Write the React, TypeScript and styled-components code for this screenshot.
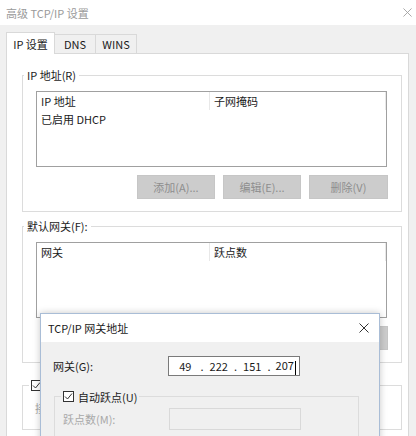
import React from "react";
import styled, { createGlobalStyle } from "styled-components";

const GlobalStyle = createGlobalStyle`
  html, body {
    margin: 0;
    padding: 0;
    background: #f0f0f0;
  }
  body {
    font-family: "Noto Sans CJK SC", "Microsoft YaHei", sans-serif;
    font-size: 11px;
    color: #1a1a1a;
  }
  * {
    box-sizing: border-box;
  }
`;

const CloseIcon = ({ size, color }: { size: number; color: string }) => (
  <svg width={size} height={size} viewBox="0 0 10 10">
    <path d="M0.5 0.5 L9.5 9.5 M9.5 0.5 L0.5 9.5" stroke={color} strokeWidth="1" fill="none" />
  </svg>
);

const CheckBox = () => (
  <CheckBoxStyle>
    <svg width="9" height="9" viewBox="0 0 9 9">
      <path d="M1 4.5 L3.5 7 L8 1.5" stroke="#333" strokeWidth="1" fill="none" />
    </svg>
  </CheckBoxStyle>
);

interface ListProps {
  columns: string[];
  rows: string[];
}

const ListView = ({ columns, rows }: ListProps) => {
  return (
    <ListBox>
      <HeaderRow>
        {columns.map((c) => (
          <HeaderCell key={c}>{c}</HeaderCell>
        ))}
      </HeaderRow>
      {rows.map((r) => (
        <ListRow key={r}>{r}</ListRow>
      ))}
    </ListBox>
  );
};

const ListButtons = () => (
  <ButtonRow>
    <Button disabled>添加(A)...</Button>
    <Button disabled>编辑(E)...</Button>
    <Button disabled $width={79}>删除(V)</Button>
  </ButtonRow>
);

const IpField = ({ parts }: { parts: string[] }) => (
  <IpBox>
    {parts.map((p, i) => (
      <React.Fragment key={i}>
        {i > 0 && <IpDot>.</IpDot>}
        <IpSegment>
          {p}
          {i === parts.length - 1 && <Caret />}
        </IpSegment>
      </React.Fragment>
    ))}
  </IpBox>
);

export default function App() {
  return (
    <>
      <GlobalStyle />
      <Window>
        <TitleBar>
          <span>高级 TCP/IP 设置</span>
          <CloseIcon size={9} color="#a0a0a0" />
        </TitleBar>
        <TabStrip>
          <Tab $active $width={49}>IP 设置</Tab>
          <Tab $width={42}>DNS</Tab>
          <Tab $width={42}>WINS</Tab>
        </TabStrip>
        <Panel>
          <Group>
            <Legend>IP 地址(R)</Legend>
            <GroupBody>
              <ListView columns={["IP 地址", "子网掩码"]} rows={["已启用 DHCP"]} />
              <ListButtons />
            </GroupBody>
          </Group>
          <Group $top={7}>
            <Legend>默认网关(F):</Legend>
            <GroupBody>
              <ListView columns={["网关", "跃点数"]} rows={[]} />
              <ListButtons />
            </GroupBody>
          </Group>
          <Group $top={15}>
            {/* the caption of this checkbox sits under the dialog */}
            <CheckLegend>
              <CheckLabel>
                <CheckBox />
              </CheckLabel>
            </CheckLegend>
            <MetricBody>
              <DisabledText>接口跃点数(N):</DisabledText>
            </MetricBody>
          </Group>
        </Panel>

        <Dialog>
          <DialogTitle>
            <span>TCP/IP 网关地址</span>
            <CloseIcon size={10} color="#333" />
          </DialogTitle>
          <DialogBody>
            <FieldRow>
              <FieldLabel $width={115}>网关(G):</FieldLabel>
              <IpField parts={["49", "222", "151", "207"]} />
            </FieldRow>
            <DialogGroup>
              <CheckLegend>
                <CheckLabel>
                  <CheckBox />
                  自动跃点(U)
                </CheckLabel>
              </CheckLegend>
              <DialogGroupBody>
                <FieldRow $height={22}>
                  <FieldLabel $width={106} $disabled>
                    跃点数(M):
                  </FieldLabel>
                  <DisabledInput />
                </FieldRow>
              </DialogGroupBody>
            </DialogGroup>
          </DialogBody>
        </Dialog>
      </Window>
    </>
  );
}

const Window = styled.div`
  position: relative;
  width: 416px;
  height: 436px;
  overflow: hidden;
  display: flex;
  flex-direction: column;
  background: #f0f0f0;
`;

const TitleBar = styled.div`
  flex: none;
  height: 25px;
  display: flex;
  align-items: center;
  justify-content: space-between;
  padding: 0 4px 0 6px;
  background: #fff;
  color: #9a9a9a;
  font-size: 11px;
`;

const TabStrip = styled.div`
  flex: none;
  height: 28px;
  display: flex;
  align-items: flex-end;
  padding-left: 6px;
`;

const Tab = styled.div<{ $active?: boolean; $width: number }>`
  position: relative;
  z-index: ${(p) => (p.$active ? 1 : 0)};
  width: ${(p) => p.$width}px;
  height: ${(p) => (p.$active ? 22 : 19)}px;
  margin-bottom: ${(p) => (p.$active ? -1 : 0)}px;
  margin-left: ${(p) => (p.$active ? 0 : -1)}px;
  display: flex;
  align-items: center;
  justify-content: center;
  background: ${(p) => (p.$active ? "#fff" : "#f0f0f0")};
  border: 1px solid #d9d9d9;
  border-bottom: none;
  &:first-child {
    margin-left: 0;
  }
`;

const Panel = styled.div`
  flex: 1;
  margin: 0 7px 0 6px;
  background: #fff;
  border: 1px solid #d9d9d9;
  border-bottom: none;
  padding: 14px 6px 0 15px;
`;

const Group = styled.fieldset<{ $top?: number }>`
  margin: ${(p) => p.$top || 0}px 0 0 0;
  padding: 0;
  min-width: 0;
  border: 1px solid #dcdcdc;
`;

const Legend = styled.legend`
  margin-left: 1px;
  padding: 0 3px;
  height: 14px;
  line-height: 14px;
`;

const CheckLegend = styled.legend`
  margin-left: 6px;
  padding: 0 2px;
  height: 14px;
  line-height: 14px;
`;

const CheckLabel = styled.span`
  display: inline-flex;
  align-items: center;
  gap: 4px;
  height: 14px;
`;

const CheckBoxStyle = styled.span`
  width: 11px;
  height: 11px;
  border: 1px solid #333;
  background: #fff;
  display: flex;
  align-items: center;
  justify-content: center;
`;

const GroupBody = styled.div`
  display: flex;
  flex-direction: column;
  padding: 9px 14px 12px 13px;
`;

const MetricBody = styled.div`
  padding: 8px 12px 13px 12px;
  line-height: 16px;
`;

const ListBox = styled.div`
  height: 76px;
  border: 1px solid #a0a0a0;
  background: #fff;
`;

const HeaderRow = styled.div`
  display: grid;
  grid-template-columns: 173px 1fr;
  height: 18px;
`;

const HeaderCell = styled.div`
  padding-left: 4px;
  line-height: 18px;
  border-right: 1px solid #e8e8e8;
`;

const ListRow = styled.div`
  height: 18px;
  line-height: 18px;
  padding-left: 4px;
`;

const ButtonRow = styled.div`
  display: flex;
  justify-content: flex-end;
  gap: 8px;
  margin: 8px -1px 0 0;
`;

const Button = styled.button<{ $width?: number }>`
  width: ${(p) => p.$width || 78}px;
  height: 24px;
  padding: 0;
  background: #cccccc;
  border: 1px solid #c6c6c6;
  color: #8e8e8e;
  font: inherit;
`;

const DisabledText = styled.span`
  color: #a8a8a8;
`;

const Dialog = styled.div`
  position: absolute;
  left: 40px;
  top: 313px;
  width: 340px;
  height: 140px;
  background: #f0f0f0;
  border: 1px solid #a9bdd6;
  box-shadow: 0 0 7px rgba(0, 0, 0, 0.22);
  display: flex;
  flex-direction: column;
`;

const DialogTitle = styled.div`
  flex: none;
  height: 28px;
  display: flex;
  align-items: center;
  justify-content: space-between;
  padding: 0 10px 0 7px;
  background: #fff;
  color: #1a1a1a;
`;

const DialogBody = styled.div`
  padding: 14px 10px 0 12px;
`;

const FieldRow = styled.div<{ $height?: number }>`
  display: flex;
  align-items: center;
  height: ${(p) => p.$height || 20}px;
`;

const FieldLabel = styled.span<{ $width: number; $disabled?: boolean }>`
  flex: none;
  width: ${(p) => p.$width}px;
  color: ${(p) => (p.$disabled ? "#a8a8a8" : "#1a1a1a")};
`;

const IpBox = styled.div`
  width: 132px;
  height: 20px;
  display: flex;
  align-items: center;
  padding-left: 3px;
  background: #fff;
  border: 1px solid #7a7a7a;
`;

const IpSegment = styled.span`
  width: 27px;
  text-align: center;
  white-space: nowrap;
`;

const IpDot = styled.span`
  width: 7px;
  text-align: center;
`;

const Caret = styled.span`
  display: inline-block;
  width: 1px;
  height: 14px;
  margin-left: 1px;
  vertical-align: middle;
  background: #000;
`;

const DialogGroup = styled.fieldset`
  margin: 13px 10px 0 1px;
  padding: 0;
  min-width: 0;
  border: 1px solid #dcdcdc;
  height: 80px;
`;

const DialogGroupBody = styled.div`
  padding: 5px 0 0 8px;
`;

const DisabledInput = styled.div`
  width: 132px;
  height: 22px;
  background: #f0f0f0;
  border: 1px solid #d9d9d9;
`;
